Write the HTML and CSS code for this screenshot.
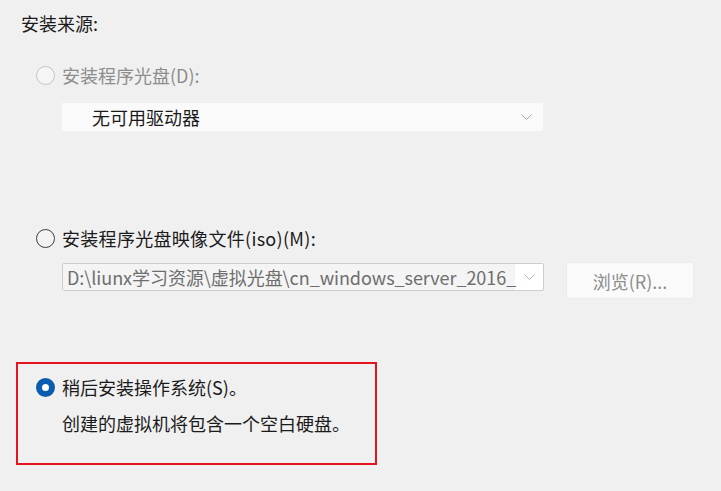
FILE: index.html
```html
<!DOCTYPE html>
<html lang="zh-CN">

<head>
    <meta charset="UTF-8">
    <meta name="viewport" content="width=device-width, initial-scale=1.0">
    <title>安装来源</title>
    <link rel="stylesheet" href="styles.css">
</head>

<body>
    <div class="page">
        <div class="section-title">安装来源:</div>

        <!-- 光盘驱动器 -->
        <label class="option option-disc disabled">
            <span class="radio"></span>
            <span>安装程序光盘(D):</span>
        </label>
        <div class="select select-disabled">
            <span class="select-text">无可用驱动器</span>
            <span class="chevron">
                <svg width="11" height="6" viewBox="0 0 11 6"><path d="M0.5 0.5 L5.5 5.5 L10.5 0.5" fill="none" stroke="#a8a8a8" stroke-width="1"/></svg>
            </span>
        </div>

        <!-- ISO 映像文件 -->
        <label class="option option-iso">
            <span class="radio"></span>
            <span>安装程序光盘映像文件(iso)(M):</span>
        </label>
        <div class="file-row">
            <div class="select select-iso">
                <span class="select-text">D:\liunx学习资源\虚拟光盘\cn_windows_server_2016_</span>
                <span class="chevron">
                    <svg width="11" height="6" viewBox="0 0 11 6"><path d="M0.5 0.5 L5.5 5.5 L10.5 0.5" fill="none" stroke="#b4b4b4" stroke-width="1"/></svg>
                </span>
            </div>
            <button class="browse-button" disabled>浏览(R)...</button>
        </div>

        <!-- 稍后安装 -->
        <div class="later-box">
            <label class="option option-later">
                <span class="radio checked"></span>
                <span>稍后安装操作系统(S)。</span>
            </label>
            <div class="later-note">创建的虚拟机将包含一个空白硬盘。</div>
        </div>
    </div>
</body>

</html>
```

FILE: styles.css
```css
body {
    margin: 0;
    background-color: #f0f0f0;
    font-family: "Noto Sans CJK SC", "Noto Sans", sans-serif;
    font-size: 18px;
    color: #1b1b1b;
}

.page {
    width: 721px;
    height: 491px;
    overflow: hidden;
}

.section-title {
    margin: 11px 0 0 21px;
    line-height: 24px;
}

.option {
    display: flex;
    align-items: center;
    gap: 7px;
    line-height: 24px;
    margin-left: 36px;
}

.option.disabled {
    color: #8d8d8d;
}

.option-disc {
    margin-top: 28px;
}

.option-iso {
    margin-top: 95px;
    letter-spacing: 0.3px;
}

.radio {
    box-sizing: border-box;
    width: 19px;
    height: 19px;
    border-radius: 50%;
    border: 1px solid #3c3c3c;
    background: #f3f3f3;
    flex-shrink: 0;
}

.option.disabled .radio {
    border-color: #c4c4c4;
    background: #f5f5f5;
}

.radio.checked {
    border: 6px solid #0a5cae;
    background: #ffffff;
}

.select {
    box-sizing: border-box;
    display: flex;
    align-items: center;
    height: 28px;
    width: 481px;
    margin-left: 62px;
}

.select-disabled {
    margin-top: 16px;
    background: #fafafa;
    color: #1b1b1b;
}

.select-disabled .select-text {
    flex: 1;
    padding-left: 30px;
}

.select-disabled .chevron {
    width: 34px;
}

.select-text {
    line-height: 24px;
    white-space: nowrap;
}

.chevron {
    display: flex;
    align-items: center;
    justify-content: center;
    height: 100%;
}

.file-row {
    display: flex;
    align-items: flex-start;
    margin-top: 12px;
}

.select-iso {
    margin-top: 1px;
    width: 482px;
    border: 1px solid #cdcdcd;
    border-radius: 2px;
    background: #ffffff;
    color: #6e6e6e;
}

.select-iso .select-text {
    width: 452px;
    height: 100%;
    padding-left: 4px;
    box-sizing: border-box;
    background: #f4f4f4;
    line-height: 26px;
    letter-spacing: -0.05px;
}

.select-iso .chevron {
    flex: 1;
}

.browse-button {
    margin-left: 22px;
    width: 128px;
    height: 37px;
    border: 1px solid #ececec;
    border-radius: 3px;
    background: #fafafa;
    color: #8d8d8d;
    font-family: inherit;
    font-size: 18px;
    padding: 0;
}

.later-box {
    box-sizing: border-box;
    margin: 63px 0 0 16px;
    width: 361px;
    height: 103px;
    border: 2px solid #e5131e;
    padding: 11px 0 0 18px;
}

.option-later {
    margin-left: 0;
}

.later-note {
    margin: 12px 0 0 26px;
    line-height: 24px;
}
```
